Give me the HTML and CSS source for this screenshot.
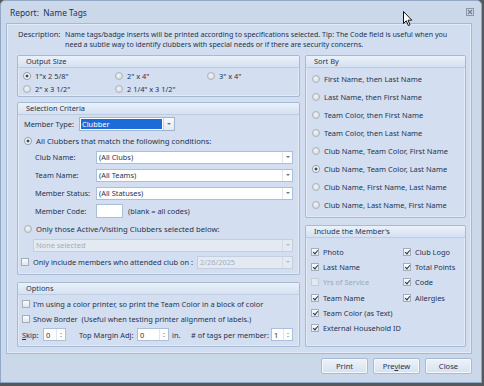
FILE: index.html
```html
<!DOCTYPE html>
<html>
<head>
<meta charset="utf-8">
<link rel="stylesheet" href="styles.css">
</head>
<body>
<div class="window">
  <div class="titlebar">
    <span class="title">Report:&nbsp; Name Tags</span>
    <svg class="close-ic" width="8" height="8" viewBox="0 0 8 8"><rect x="0.5" y="0.5" width="7" height="7" fill="none" stroke="#8a97a8"/><path d="M2 2L6 6M6 2L2 6" stroke="#6f7d90" stroke-width="1.2"/></svg>
  </div>
  <div class="panel">
    <div class="desc">
      <span class="desc-label">Description:</span>
      <p class="desc-text">Name tags/badge inserts will be printed according to specifications selected. Tip: The Code field is useful when you<br>need a subtle way to identify clubbers with special needs or if there are security concerns.</p>
    </div>
    <div class="columns">
      <div class="col col-left">
        <section class="group g-output">
          <div class="ghead">Output Size</div>
          <div class="output-grid">
            <div class="opt"><span class="radio checked"></span>1"x 2 5/8"</div>
            <div class="opt"><span class="radio"></span>2" x 4"</div>
            <div class="opt"><span class="radio"></span>3" x 4"</div>
            <div class="opt"><span class="radio"></span>2" x 3 1/2"</div>
            <div class="opt"><span class="radio"></span>2 1/4" x 3 1/2"</div>
          </div>
        </section>
        <section class="group g-select">
          <div class="ghead">Selection Criteria</div>
          <div class="sel-body">
            <div class="row r-type">
              <span class="lbl-type">Member Type:</span>
              <div class="combo combo-type"><span class="hl">Clubber</span><span class="dd"><i class="arrow"></i></span></div>
            </div>
            <div class="row r-all"><span class="radio checked"></span><span>All Clubbers that match the following conditions:</span></div>
            <div class="row r-field"><span class="lbl-field">Club Name:</span><div class="combo combo-field"><span class="val">(All Clubs)</span><span class="dd"><i class="arrow"></i></span></div></div>
            <div class="row r-field"><span class="lbl-field">Team Name:</span><div class="combo combo-field"><span class="val">(All Teams)</span><span class="dd"><i class="arrow"></i></span></div></div>
            <div class="row r-field"><span class="lbl-field">Member Status:</span><div class="combo combo-field"><span class="val">(All Statuses)</span><span class="dd"><i class="arrow"></i></span></div></div>
            <div class="row r-field"><span class="lbl-field">Member Code:</span><div class="textbox code-box"></div><span class="hint">(blank = all codes)</span></div>
            <div class="row r-only"><span class="radio"></span><span>Only those Active/Visiting Clubbers selected below:</span></div>
            <div class="row r-none"><div class="combo combo-none disabled"><span class="val">None selected</span><span class="dd"><i class="arrow"></i></span></div></div>
            <div class="row r-attend"><span class="cb"></span><span>Only include members who attended club on :</span><div class="combo combo-date disabled"><span class="val">2/26/2025</span><span class="dd"><i class="arrow"></i></span></div></div>
          </div>
        </section>
        <section class="group g-options">
          <div class="ghead">Options</div>
          <div class="opt-body">
            <div class="row r-o1"><span class="cb"></span><span>I'm using a color printer, so print the Team Color in a block of color</span></div>
            <div class="row r-o2"><span class="cb"></span><span>Show Border&nbsp; (Useful when testing printer alignment of labels.)</span></div>
            <div class="row r-spin">
              <span class="l-skip"><u>S</u>kip:</span>
              <div class="spin sp-skip"><span class="val">0</span><span class="spb"><i class="up"></i><i class="dn"></i></span></div>
              <span class="l-top">Top Margin Adj:</span>
              <div class="spin sp-top"><span class="val">0</span><span class="spb"><i class="up"></i><i class="dn"></i></span></div>
              <span class="l-in">in.</span>
              <span class="l-tags"># of tags per member:</span>
              <div class="spin sp-tags"><span class="val">1</span><span class="spb"><i class="up"></i><i class="dn"></i></span></div>
            </div>
          </div>
        </section>
      </div>
      <div class="col col-right">
        <section class="group g-sort">
          <div class="ghead">Sort By</div>
          <div class="sort-body">
            <div class="opt srow"><span class="radio"></span>First Name, then Last Name</div>
            <div class="opt srow"><span class="radio"></span>Last Name, then First Name</div>
            <div class="opt srow"><span class="radio"></span>Team Color, then First Name</div>
            <div class="opt srow"><span class="radio"></span>Team Color, then Last Name</div>
            <div class="opt srow"><span class="radio"></span>Club Name, Team Color, First Name</div>
            <div class="opt srow"><span class="radio checked"></span>Club Name, Team Color, Last Name</div>
            <div class="opt srow"><span class="radio"></span>Club Name, First Name, Last Name</div>
            <div class="opt srow"><span class="radio"></span>Club Name, Last Name, First Name</div>
          </div>
        </section>
        <section class="group g-include">
          <div class="ghead">Include the Member's</div>
          <div class="inc-grid">
            <div class="opt"><span class="cb checked"></span>Photo</div>
            <div class="opt"><span class="cb checked"></span>Club Logo</div>
            <div class="opt"><span class="cb checked"></span>Last Name</div>
            <div class="opt"><span class="cb checked"></span>Total Points</div>
            <div class="opt disabled-t"><span class="cb dis"></span>Yrs of Service</div>
            <div class="opt"><span class="cb checked"></span>Code</div>
            <div class="opt"><span class="cb checked"></span>Team Name</div>
            <div class="opt"><span class="cb checked"></span>Allergies</div>
            <div class="opt span2"><span class="cb checked"></span>Team Color (as Text)</div>
            <div class="opt span2"><span class="cb checked"></span>External Household ID</div>
          </div>
        </section>
      </div>
    </div>
  </div>
  <div class="buttons">
    <button class="btn">Print</button>
    <button class="btn">Pre<u>v</u>iew</button>
    <button class="btn">Close</button>
  </div>
  <svg class="cursor" width="10" height="16" viewBox="0 0 10 16"><path d="M0.5 0.5V12.5L3.3 9.8L5.3 14.5L7 13.8L5 9.2H8.8Z" fill="#fff" stroke="#111" stroke-width="1" stroke-linejoin="round"/></svg>
</div>
</body>
</html>
```
FILE: styles.css
```css
* { box-sizing: border-box; margin: 0; padding: 0; }
body {
  margin: 0;
  width: 484px;
  height: 386px;
  overflow: hidden;
  background: #55595e;
  font-family: "Noto Sans", "Open Sans", sans-serif;
  font-size: 7.4px;
  color: #1e3350;
}
.window {
  position: relative;
  width: 482px;
  height: 383px;
  background: #cad8ea;
  border: 1px solid #93a8c4;
  border-radius: 5px 5px 0 0;
  display: flex;
  flex-direction: column;
}
.titlebar {
  height: 22px;
  display: flex;
  align-items: center;
  justify-content: space-between;
  padding: 0 7px 0 9px;
  font-size: 8.4px;
  color: #213554;
}
.panel {
  height: 331px;
  margin: 0 9px 0 5px;
  border: 1px solid #a6b9d2;
  box-shadow: inset 0 0 0 1px #e3ebf6;
  background: #d2deef;
  padding: 5px 5px 0 10px;
}
.desc { display: flex; height: 20px; line-height: 10px; font-size: 7.1px; }
.desc-label { width: 48px; padding-left: 1px; flex: none; font-size: 7.5px; }
.desc-text { white-space: nowrap; }
.columns { display: flex; gap: 5px; margin-top: 6px; }
.col { display: flex; flex-direction: column; }
.col-left { width: 283px; }
.col-right { width: 161px; }
.group {
  border: 1px solid #a6bad4;
  border-radius: 2px;
  background: #d3dff0;
  box-shadow: inset 0 0 0 1px #e2eaf6;
  overflow: hidden;
}
.ghead {
  height: 12px;
  line-height: 11px;
  padding-left: 8px;
  background: linear-gradient(#eaf1fa, #d5e1f1);
  border-bottom: 1px solid #bccde3;
  white-space: nowrap;
  font-size: 7.4px;
}
.g-output { height: 42px; }
.g-select { height: 173px; margin-top: 5px; }
.g-options { height: 65px; margin-top: 7px; }
.g-sort { height: 163px; }
.g-include { height: 122px; margin-top: 7px; }

.opt { display: flex; align-items: center; gap: 4px; white-space: nowrap; }
.radio {
  flex: none;
  width: 8px; height: 8px;
  border-radius: 50%;
  border: 1px solid #aab3bf;
  background: radial-gradient(circle at 45% 40%, #f2f3f5, #cfd4da);
}
.radio.checked {
  background: radial-gradient(circle, #3d4b5e 0 1.2px, #ffffff 1.8px);
  border-color: #8d99a8;
}
.cb {
  flex: none;
  position: relative;
  width: 8px; height: 8px;
  border: 1px solid #a3aebd;
  background: linear-gradient(#fbfcfd, #e2e7ed);
}
.cb.checked::after {
  content: "";
  position: absolute;
  left: 1.6px; top: 0;
  width: 2px; height: 4px;
  border-right: 1.4px solid #24354c;
  border-bottom: 1.4px solid #24354c;
  transform: rotate(40deg);
}
.cb.dis { border-color: #c3ccd8; background: #e3e9f1; }
.disabled-t { color: #98a7ba; }

.output-grid {
  display: grid;
  grid-template-columns: repeat(3, 92px);
  grid-auto-rows: 13px;
  padding: 1px 0 0 5px;
}

.row { display: flex; align-items: center; white-space: nowrap; }
.sel-body { padding-left: 6px; }
.r-type { height: 18px; }
.lbl-type { width: 55px; flex: none; }
.r-all { height: 15px; gap: 4px; font-size: 7.7px; }
.r-field { height: 18px; }
.lbl-field { width: 61px; margin-left: 11px; flex: none; }
.r-only { height: 18px; gap: 4px; font-size: 7.7px; }
.r-none { height: 14px; }
.r-attend { height: 20px; }
.r-attend .cb { margin-left: -3px; margin-right: 4px; }

.combo {
  position: relative;
  height: 13px;
  background: #ffffff;
  border: 1px solid #abbfd9;
  display: flex;
  align-items: center;
}
.combo .val { padding-left: 2px; flex: 1; }
.combo .dd {
  width: 10px;
  height: 100%;
  border-left: 1px solid #dfe6ef;
  display: flex;
  align-items: center;
  justify-content: center;
  flex: none;
}
.arrow {
  width: 0; height: 0;
  border-left: 2px solid transparent;
  border-right: 2px solid transparent;
  border-top: 2px solid #6b7788;
}
.combo-type { width: 96px; height: 14px; border-color: #9fb4cf; }
.combo-type .hl {
  flex: 1;
  margin: 1px;
  height: 10px;
  line-height: 10px;
  padding-left: 1px;
  background: #1c6bd6;
  color: #ffffff;
}
.combo-type .dd { width: 11px; border-left: 1px solid #c9d5e4; background: linear-gradient(#f7f9fc, #e3e9f1); }
.combo-field { width: 197px; }
.textbox { height: 14px; background: #fff; border: 1px solid #abbfd9; }
.code-box { width: 27px; }
.hint { margin-left: 5px; }
.combo-none { width: 260px; margin-left: 9px; }
.disabled { background: #e4eaf2; border-color: #c2cfe0; color: #a1adbc; }
.disabled .dd { border-left-color: #d3dce8; }
.disabled .arrow { border-top-color: #b0bac6; }
.combo-date { width: 96px; margin-left: auto; margin-right: 6px; }

.opt-body { padding: 1px 0 0 4px; }
.r-o1, .r-o2 { height: 15px; gap: 3px; }
.r-spin { height: 17px; }
.spin {
  height: 13px;
  background: #fff;
  border: 1px solid #abbfd9;
  display: flex;
  align-items: center;
  flex: none;
}
.spin .val { flex: 1; padding-left: 2px; }
.spb {
  width: 9px;
  height: 100%;
  border-left: 1px solid #dfe6ef;
  display: flex;
  flex-direction: column;
  align-items: center;
  justify-content: center;
  gap: 2px;
}
.spb .up, .spb .dn { width: 0; height: 0; border-left: 1.5px solid transparent; border-right: 1.5px solid transparent; }
.spb .up { border-bottom: 1.5px solid #6b7788; }
.spb .dn { border-top: 1.5px solid #6b7788; }
.l-skip { width: 21px; flex: none; }
.sp-skip { width: 23px; }
.l-top { width: 58px; margin-left: 13px; flex: none; }
.sp-top { width: 32px; }
.l-in { width: 19px; margin-left: 3px; flex: none; }
.l-tags { width: 80px; flex: none; }
.sp-tags { width: 22px; }

.sort-body { padding: 2px 0 0 6px; font-size: 7.5px; }
.srow { height: 18px; }

.inc-grid {
  display: grid;
  grid-template-columns: 92px 1fr;
  grid-auto-rows: 15.3px;
  padding: 6px 0 0 5px;
}
.inc-grid .opt { gap: 4px; }
.span2 { grid-column: span 2; }

.buttons {
  display: flex;
  justify-content: flex-end;
  gap: 5px;
  padding: 4px 9px 0 0;
}
.btn {
  width: 47px;
  height: 16px;
  font: inherit;
  font-size: 7.6px;
  color: #1e3350;
  border: 1px solid #a8bbd4;
  border-radius: 2px;
  background: linear-gradient(#eef3fa, #d6e1ef);
  box-shadow: inset 0 0 0 1px #f4f7fb;
}
.cursor { position: absolute; left: 402px; top: 10px; }
```
